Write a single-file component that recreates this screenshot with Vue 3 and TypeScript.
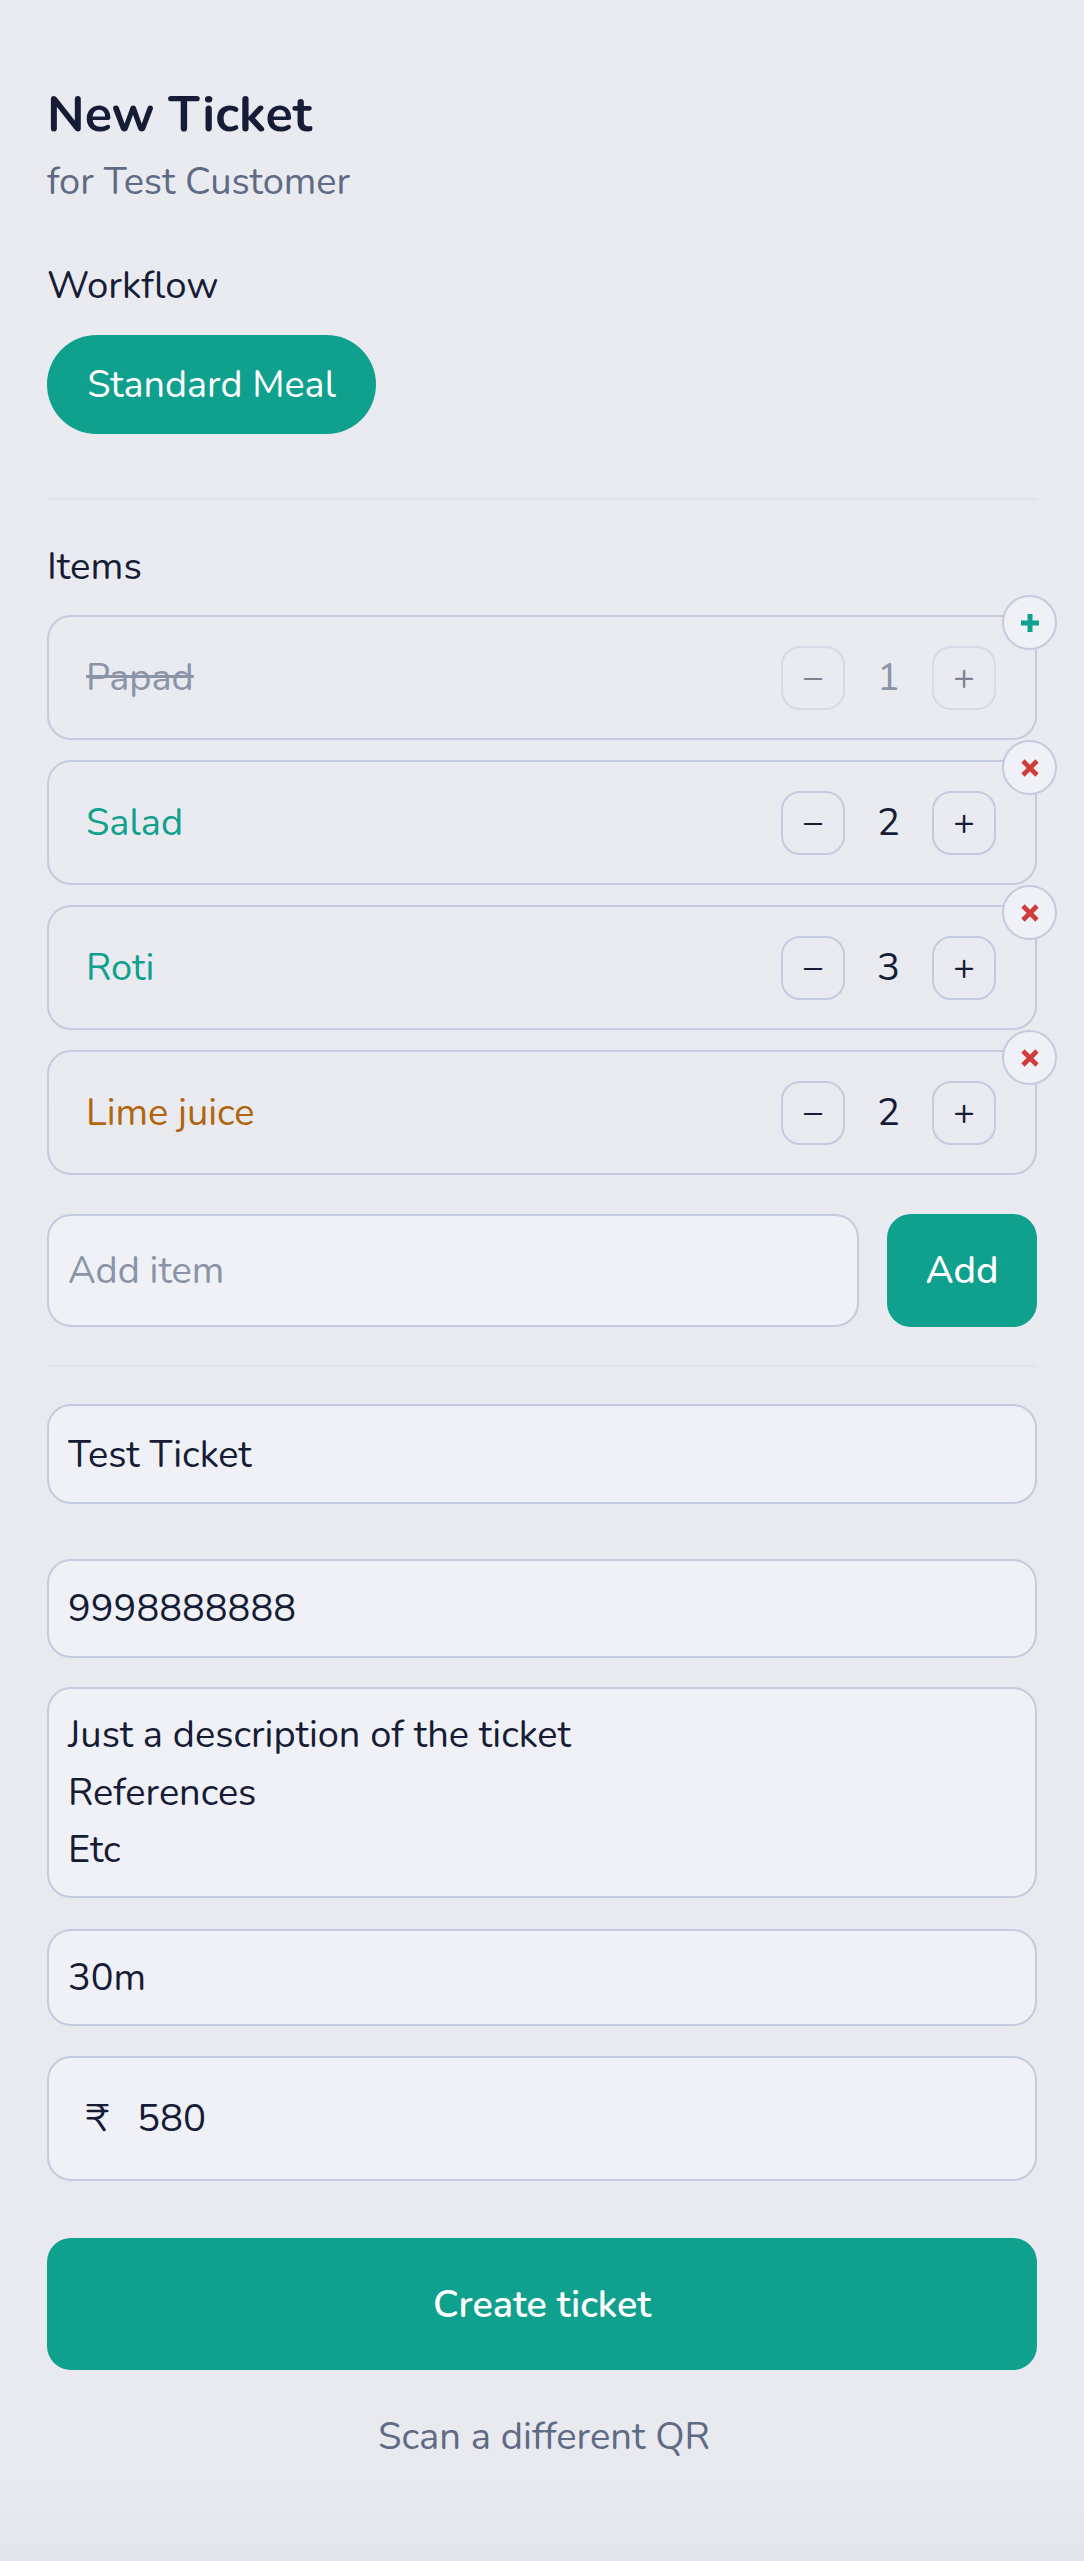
<script setup lang="ts">
import { ref } from 'vue'

interface Item {
  name: string
  qty: number
  tone: 'off' | 'new' | 'warn'
}

const items = ref<Item[]>([
  { name: 'Papad', qty: 1, tone: 'off' },
  { name: 'Salad', qty: 2, tone: 'new' },
  { name: 'Roti', qty: 3, tone: 'new' },
  { name: 'Lime juice', qty: 2, tone: 'warn' },
])
const newItem = ref('')
const title = ref('Test Ticket')
const phone = ref('9998888888')
const description = ref('Just a description of the ticket\nReferences\nEtc')
const duration = ref('30m')
const price = ref('580')
</script>

<template>
  <main class="page">
    <h1 class="title">New Ticket</h1>
    <p class="subtitle">for Test Customer</p>

    <h2 class="label workflow-label">Workflow</h2>
    <button class="chip" type="button">Standard Meal</button>

    <hr class="rule rule-top" />

    <h2 class="label items-label">Items</h2>
    <ul class="items">
      <li v-for="item in items" :key="item.name" class="item" :class="item.tone">
        <span class="item-name">{{ item.name }}</span>
        <div class="stepper">
          <button class="step" type="button">–</button>
          <span class="qty">{{ item.qty }}</span>
          <button class="step" type="button">+</button>
        </div>
        <button class="badge" type="button">
          <svg v-if="item.tone === 'off'" viewBox="0 0 20 20" class="badge-icon plus">
            <path d="M10 1v18M1 10h18" />
          </svg>
          <svg v-else viewBox="0 0 20 20" class="badge-icon cross">
            <path d="M3 3l14 14M17 3L3 17" />
          </svg>
        </button>
      </li>
    </ul>

    <div class="add-row">
      <input v-model="newItem" class="field add-input" placeholder="Add item" />
      <button class="add-btn" type="button">Add</button>
    </div>

    <hr class="rule rule-bottom" />

    <input v-model="title" class="field f-title" />
    <input v-model="phone" class="field f-phone" />
    <textarea v-model="description" class="field f-desc" rows="3"></textarea>
    <input v-model="duration" class="field f-duration" />
    <div class="field f-price">
      <span class="rupee">₹</span>
      <input v-model="price" class="price-input" />
    </div>

    <button class="create" type="button">Create ticket</button>
    <button class="scan" type="button">Scan a different QR</button>
  </main>
</template>

<style>
html, body { margin: 0; background: #e9ebf1; }
</style>

<style scoped>
* { box-sizing: border-box; font-family: "Nunito", "Lato", "Open Sans", sans-serif; }
.page {
  width: 1084px;
  height: 2561px;
  padding: 89px 47px 0;
  background: linear-gradient(#e9ebf1 0, #e8eaf0 2480px, #e2e5ed 2561px);
  color: #161c35;
  overflow: hidden;
}
.title { margin: 0; font-size: 50.4px; line-height: 52px; font-weight: 700; }
.subtitle { margin: 17px 0 0; font-size: 38px; line-height: 48px; color: #5f6a84; }
.label { margin: 0; font-size: 38.4px; line-height: 48px; font-weight: 400; }
.workflow-label { margin-top: 56px; }
.chip {
  display: block;
  width: 329px;
  height: 99px;
  margin-top: 25px;
  border: 0;
  border-radius: 50px;
  background: #10a08e;
  color: #fff;
  font-size: 37.8px;
  padding: 0;
}
.rule { margin: 0; height: 2px; border: 0; background: #e3e5ec; }
.rule-top { margin-top: 64px; }
.items-label { margin-top: 43px; }
.items { list-style: none; margin: 24px 0 0; padding: 0; display: flex; flex-direction: column; gap: 20px; }
.item {
  position: relative;
  height: 125px;
  display: flex;
  align-items: center;
  justify-content: space-between;
  padding: 0 39px 0 37px;
  border: 2px solid #c5cbde;
  border-radius: 24px;
}
.item-name { font-size: 38px; }
.new .item-name { color: #10a08e; }
.warn .item-name { color: #b1650f; }
.off .item-name { color: #8b93a7; text-decoration: line-through; }
.stepper { display: flex; align-items: center; }
.step {
  width: 64px;
  height: 64px;
  padding: 0;
  border: 2px solid #c5cbde;
  border-radius: 19px;
  background: transparent;
  color: #161c35;
  font-size: 36px;
  line-height: 1;
}
.qty { width: 87px; text-align: center; font-size: 38.4px; }
.off .step { opacity: 0.5; }
.off .qty { color: #8b93a7; }
.badge {
  position: absolute;
  top: -22px;
  right: -22px;
  width: 55px;
  height: 55px;
  padding: 0;
  display: flex;
  align-items: center;
  justify-content: center;
  border: 2px solid #c5cbde;
  border-radius: 50%;
  background: #eff1f7;
}
.badge-icon { width: 20px; height: 20px; fill: none; }
.plus { stroke: #10a08e; stroke-width: 5; }
.cross { stroke: #d03c3c; stroke-width: 4.6; }
.add-row { display: flex; gap: 28px; margin-top: 39px; }
.field {
  display: block;
  width: 100%;
  border: 2px solid #c5cbde;
  border-radius: 24px;
  background: #eff1f7;
  color: #161c35;
  font-size: 38px;
  padding: 0 19px;
  outline: none;
}
.add-input { flex: 1; width: auto; min-width: 0; height: 113px; }
.add-input::placeholder { color: #8b93a7; opacity: 1; }
.add-btn {
  width: 150px;
  height: 113px;
  padding: 0;
  border: 0;
  border-radius: 24px;
  background: #10a08e;
  color: #fff;
  font-size: 38.4px;
  font-weight: 500;
}
.rule-bottom { margin-top: 38px; }
.f-title { height: 100px; margin-top: 37px; }
.f-phone { height: 99px; margin-top: 55px; }
.f-desc { height: 211px; margin-top: 29px; padding: 17px 19px 0; line-height: 57.6px; resize: none; }
.f-duration { height: 97px; margin-top: 31px; }
.f-price { height: 125px; margin-top: 30px; display: flex; align-items: center; padding: 0 0 0 37px; }
.rupee { width: 51px; font-size: 38.4px; }
.price-input { flex: 1; min-width: 0; border: 0; padding: 0; background: transparent; color: inherit; font-size: 38.4px; outline: none; }
.create {
  display: block;
  width: 100%;
  height: 132px;
  margin-top: 57px;
  border: 0;
  border-radius: 24px;
  background: #10a08e;
  color: #fff;
  font-size: 37.8px;
  font-weight: 600;
}
.scan {
  display: block;
  width: 100%;
  height: 48px;
  margin-top: 40px;
  padding: 0 0 0 4px;
  border: 0;
  background: transparent;
  color: #5f6a84;
  font-size: 38.2px;
}
</style>
